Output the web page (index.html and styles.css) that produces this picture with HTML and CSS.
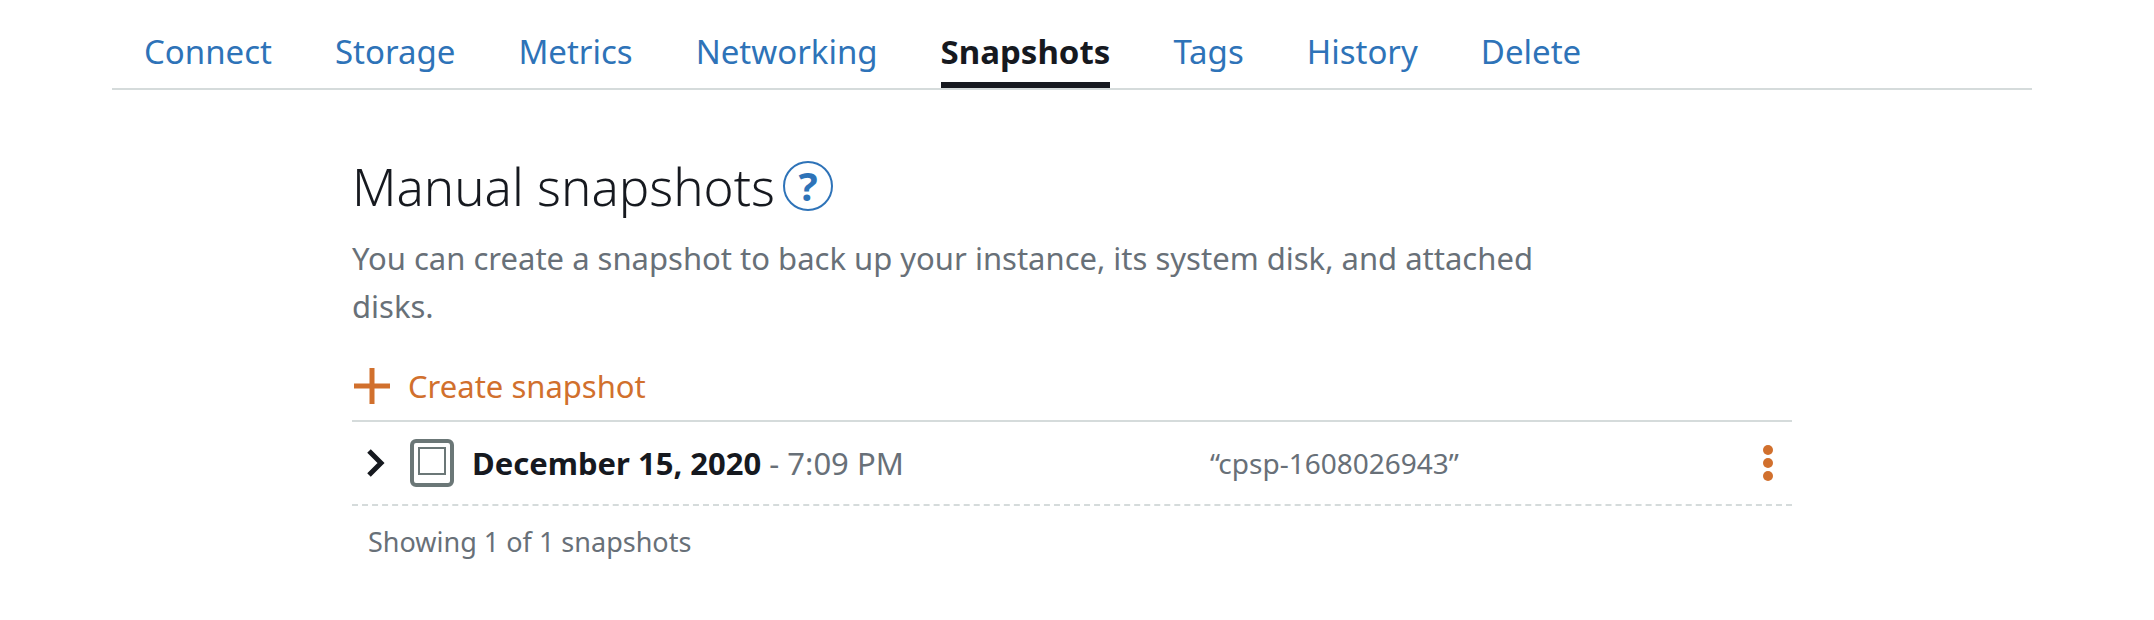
FILE: index.html
```html
<!DOCTYPE html>
<html lang="en">
<head>
    <meta charset="UTF-8">
    <meta name="viewport" content="width=device-width, initial-scale=1.0">
    <title>Snapshots</title>
    <link rel="stylesheet" href="styles.css">
</head>
<body>
    <div class="page">
        <nav class="tabs">
            <a href="#connect">Connect</a>
            <a href="#storage">Storage</a>
            <a href="#metrics">Metrics</a>
            <a href="#networking">Networking</a>
            <a href="#snapshots" class="active" aria-current="page">Snapshots</a>
            <a href="#tags">Tags</a>
            <a href="#history">History</a>
            <a href="#delete">Delete</a>
        </nav>

        <main class="content">
            <div class="heading">
                <h1>Manual snapshots</h1>
                <button type="button" class="help" aria-label="Help">?</button>
            </div>
            <p class="description">You can create a snapshot to back up your instance, its system disk, and attached disks.</p>

            <button type="button" class="create">
                <svg width="36" height="36" viewBox="0 0 36 36" aria-hidden="true">
                    <path d="M18 0v36M0 18h36" stroke="currentColor" stroke-width="5"/>
                </svg>
                <span>Create snapshot</span>
            </button>

            <div class="snapshot">
                <button type="button" class="expand" aria-label="Show details">
                    <svg width="20" height="30" viewBox="0 0 20 30" aria-hidden="true">
                        <path d="M3 3l12 12L3 27" fill="none" stroke="currentColor" stroke-width="5"/>
                    </svg>
                </button>
                <svg class="disk" width="44" height="48" viewBox="0 0 44 48" aria-hidden="true">
                    <rect x="2" y="2" width="40" height="44" rx="4" fill="none" stroke="currentColor" stroke-width="4"/>
                    <rect x="9" y="9" width="26" height="26" fill="none" stroke="currentColor" stroke-width="2"/>
                </svg>
                <div class="date"><strong>December 15, 2020</strong> - 7:09 PM</div>
                <div class="name">“cpsp-1608026943”</div>
                <button type="button" class="menu" aria-label="Snapshot actions">
                    <svg width="12" height="36" viewBox="0 0 12 36" fill="currentColor" aria-hidden="true">
                        <circle cx="6" cy="5" r="5"/>
                        <circle cx="6" cy="18" r="5"/>
                        <circle cx="6" cy="31" r="5"/>
                    </svg>
                </button>
            </div>
            <p class="count">Showing 1 of 1 snapshots</p>
        </main>
    </div>
</body>
</html>
```
FILE: styles.css
```css
:root {
    --text: #16191f;
    --muted: #687078;
    --link: #2e73b8;
    --orange: #d1702d;
    --line: #d5dbdb;
}

* {
    box-sizing: border-box;
}

body {
    margin: 0;
    background: #fff;
    color: var(--muted);
    font-family: "Noto Sans", sans-serif;
    font-size: 31px;
}

button {
    padding: 0;
    border: 0;
    background: none;
    color: inherit;
    font: inherit;
    cursor: pointer;
}

svg {
    display: block;
    flex: none;
}

.page {
    padding: 16px 122px 0 112px;
}

.tabs {
    display: flex;
    gap: 63px;
    padding-left: 32px;
    border-bottom: 2px solid var(--line);
}

.tabs a {
    height: 72px;
    color: var(--link);
    font-size: 33px;
    line-height: 72px;
    text-decoration: none;
}

.tabs .active {
    border-bottom: 6px solid var(--text);
    color: var(--text);
    font-weight: bold;
}

.content {
    width: 75%;
    margin: 0 auto;
    padding-top: 60px;
}

.heading {
    display: flex;
    align-items: center;
    gap: 8px;
}

h1 {
    margin: 0;
    color: var(--text);
    font-size: 51px;
    font-weight: 300;
    line-height: 72px;
}

.help {
    width: 50px;
    height: 50px;
    border: 2px solid var(--link);
    border-radius: 50%;
    color: var(--link);
    font-size: 40px;
    font-weight: bold;
    line-height: 44px;
}

.description {
    max-width: 1200px;
    margin: 12px 0 32px;
    line-height: 48px;
}

.create {
    display: flex;
    align-items: center;
    gap: 18px;
    margin-bottom: 10px;
    padding-left: 2px;
    color: var(--orange);
    line-height: 48px;
}

.snapshot {
    display: flex;
    align-items: center;
    height: 86px;
    padding: 0 18px 0 14px;
    border-top: 2px solid var(--line);
    border-bottom: 2px dashed var(--line);
}

.expand {
    margin-right: 24px;
    color: var(--text);
}

.disk {
    margin-right: 18px;
    color: #6b7777;
}

.date {
    flex: 1;
}

.date strong {
    color: var(--text);
}

.name {
    width: 552px;
    font-size: 28px;
}

.menu {
    color: var(--orange);
}

.count {
    margin: 16px;
    font-size: 27px;
    line-height: 40px;
}
```
